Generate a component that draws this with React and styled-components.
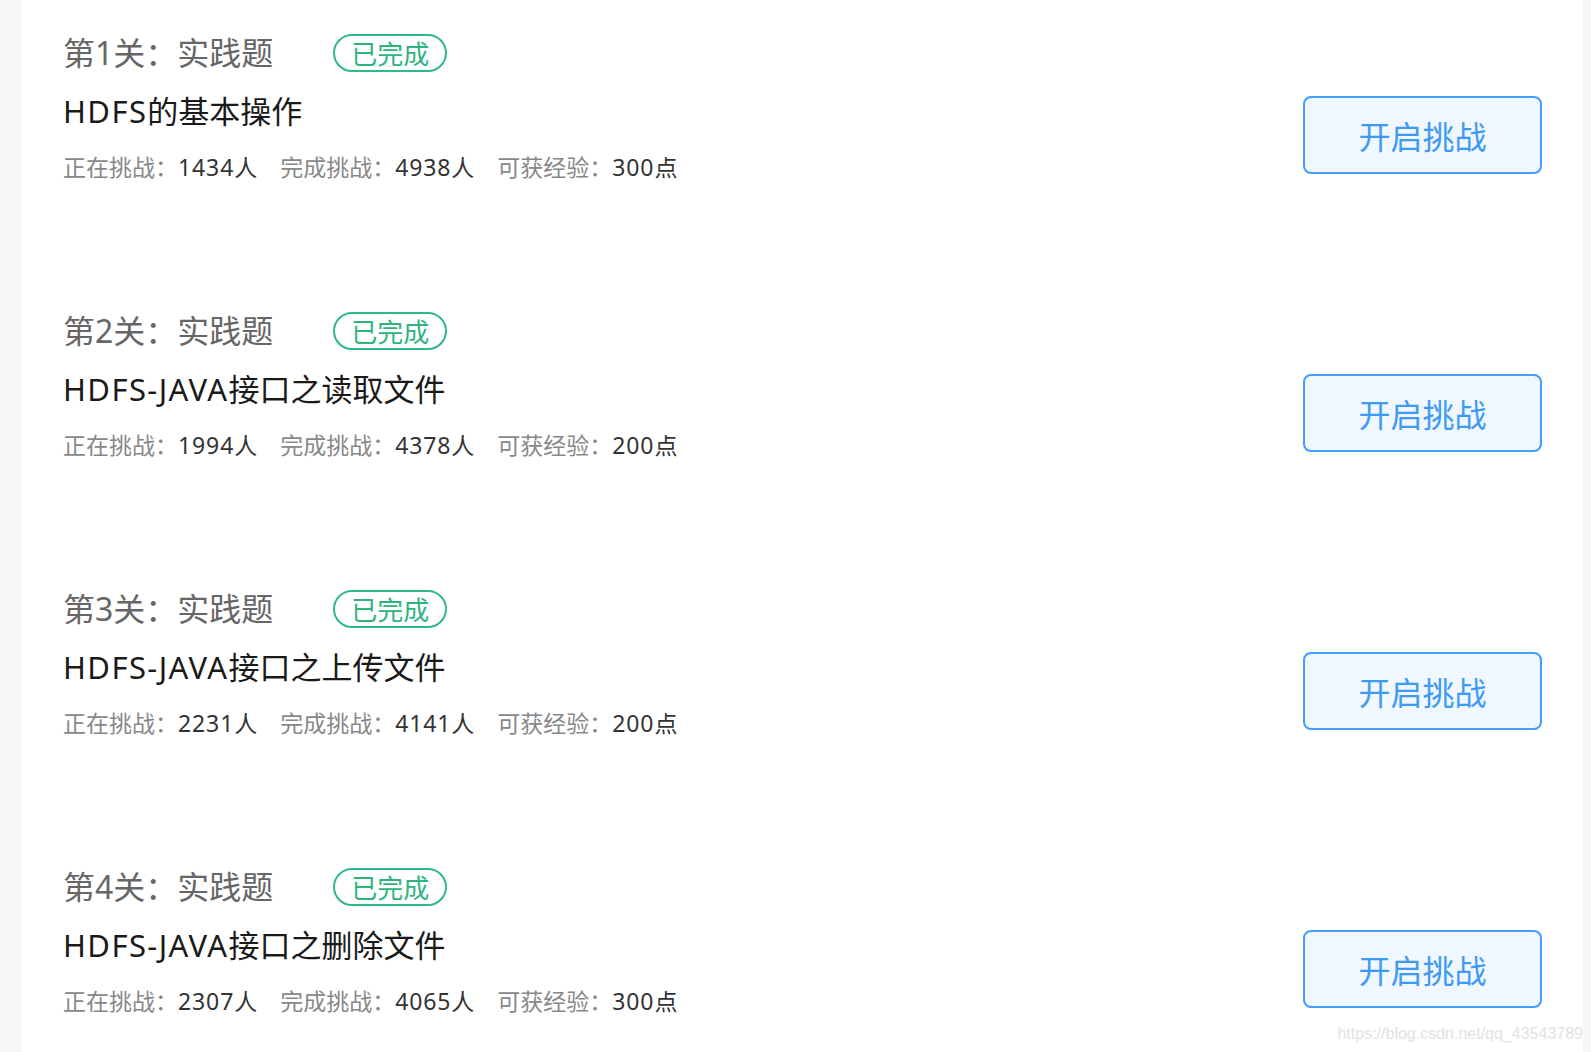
import React from 'react';
import styled, { createGlobalStyle } from 'styled-components';

const GlobalStyle = createGlobalStyle`
  html, body {
    margin: 0;
    padding: 0;
    background: #f7f7f7;
  }
  * {
    box-sizing: border-box;
  }
`;

const Page = styled.div`
  position: relative;
  height: 100vh;
  overflow: hidden;
  padding: 0 8px 0 22px;
  font-family: "Noto Sans", "Noto Sans CJK SC", sans-serif;
`;

const Panel = styled.div`
  background: #ffffff;
  height: 100%;
`;

const Row = styled.div`
  display: flex;
  justify-content: space-between;
  align-items: flex-start;
  height: 278px;
  padding: 0 41px;
`;

const Info = styled.div`
  padding-top: 33px;
`;

const TitleLine = styled.div`
  display: flex;
  align-items: center;
  height: 40px;
`;

const Title = styled.span`
  font-size: 32px;
  line-height: 40px;
  color: #666666;
`;

const Badge = styled.span`
  display: inline-flex;
  align-items: center;
  height: 38px;
  margin-left: 60px;
  padding: 0 16px;
  border: 2px solid #2fb985;
  border-radius: 20px;
  font-size: 26px;
  color: #2db47e;
`;

const Name = styled.div`
  margin-top: 18px;
  font-size: 31px;
  line-height: 40px;
  color: #1a1a1a;
`;

const Latin = styled.span`
  letter-spacing: 1.4px;
`;

const Stats = styled.div`
  display: flex;
  margin-top: 21px;
  font-size: 23px;
  line-height: 30px;
  white-space: nowrap;
`;

const Stat = styled.span`
  margin-right: 22px;
`;

const Label = styled.span`
  color: #888888;
`;

const Value = styled.span`
  color: #333333;
  letter-spacing: 0.9px;
`;

const StartButton = styled.button`
  width: 239px;
  height: 78px;
  margin-top: 96px;
  border: 2px solid #419ef9;
  border-radius: 8px;
  background: #f1f7ff;
  color: #3d9af5;
  font-family: inherit;
  font-size: 32px;
  cursor: pointer;
`;

const Watermark = styled.div`
  position: absolute;
  right: 8px;
  bottom: 10px;
  font-family: "Liberation Sans", Arial, sans-serif;
  font-size: 16px;
  line-height: 1;
  color: #e2e2e2;
`;

const levels = [
  { no: 1, name: 'HDFS的基本操作', doing: 1434, done: 4938, exp: 300 },
  { no: 2, name: 'HDFS-JAVA接口之读取文件', doing: 1994, done: 4378, exp: 200 },
  { no: 3, name: 'HDFS-JAVA接口之上传文件', doing: 2231, done: 4141, exp: 200 },
  { no: 4, name: 'HDFS-JAVA接口之删除文件', doing: 2307, done: 4065, exp: 300 },
];

// latin runs get a touch of spacing so they sit as wide as the original font
const renderName = name => name.split(/([A-Za-z-]+)/).filter(Boolean).map((part, i) => (
  /[A-Za-z]/.test(part) ? <Latin key={i}>{part}</Latin> : <span key={i}>{part}</span>
));

const LevelRow = ({ level }) => (
  <Row>
    <Info>
      <TitleLine>
        <Title>{`第${level.no}关：实践题`}</Title>
        <Badge>已完成</Badge>
      </TitleLine>
      <Name>{renderName(level.name)}</Name>
      <Stats>
        <Stat>
          <Label>正在挑战：</Label>
          <Value>{`${level.doing}人`}</Value>
        </Stat>
        <Stat>
          <Label>完成挑战：</Label>
          <Value>{`${level.done}人`}</Value>
        </Stat>
        <Stat>
          <Label>可获经验：</Label>
          <Value>{`${level.exp}点`}</Value>
        </Stat>
      </Stats>
    </Info>
    <StartButton>开启挑战</StartButton>
  </Row>
);

export default function App() {
  return (
    <Page>
      <GlobalStyle />
      <Panel>
        {levels.map(level => (
          <LevelRow key={level.no} level={level} />
        ))}
      </Panel>
      <Watermark>https://blog.csdn.net/qq_43543789</Watermark>
    </Page>
  );
}
